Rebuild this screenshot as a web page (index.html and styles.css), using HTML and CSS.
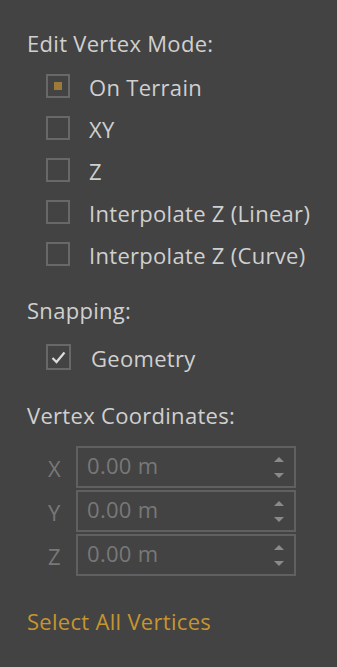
FILE: index.html
```html
<!DOCTYPE html>
<html lang="en">
<head>
    <meta charset="UTF-8">
    <title>Edit Vertex</title>
    <link rel="stylesheet" href="styles.css">
</head>
<body>
<div class="panel">
    <h3 class="section-title first">Edit Vertex Mode:</h3>
    <ul class="option-list">
        <li class="option"><span class="box radio-on"></span><span class="label">On Terrain</span></li>
        <li class="option"><span class="box"></span><span class="label">XY</span></li>
        <li class="option"><span class="box"></span><span class="label">Z</span></li>
        <li class="option"><span class="box"></span><span class="label">Interpolate Z (Linear)</span></li>
        <li class="option"><span class="box"></span><span class="label">Interpolate Z (Curve)</span></li>
    </ul>

    <h3 class="section-title snap-title">Snapping:</h3>
    <ul class="option-list snap-list">
        <li class="option">
            <span class="box box-lg">
                <svg width="15" height="13" viewBox="0 0 15 13"><path d="M1.5 7 L5.5 11 L13.5 1.5" fill="none" stroke="#dcdcdc" stroke-width="2.2"/></svg>
            </span>
            <span class="label label-geo">Geometry</span>
        </li>
    </ul>

    <h3 class="section-title coord-title">Vertex Coordinates:</h3>
    <div class="coords">
        <div class="coord-row">
            <span class="axis">X</span>
            <div class="num-input"><span class="value">0.00 m</span><span class="spin"><i class="up"></i><i class="down"></i></span></div>
        </div>
        <div class="coord-row">
            <span class="axis">Y</span>
            <div class="num-input"><span class="value">0.00 m</span><span class="spin"><i class="up"></i><i class="down"></i></span></div>
        </div>
        <div class="coord-row">
            <span class="axis">Z</span>
            <div class="num-input"><span class="value">0.00 m</span><span class="spin"><i class="up"></i><i class="down"></i></span></div>
        </div>
    </div>

    <a class="select-all">Select All Vertices</a>
</div>
</body>
</html>
```

FILE: styles.css
```css
/*reset*/
body,h3,ul,li{
    padding: 0;
    margin: 0;
}
html,body{
    height: 100%;
}
body{
    background: #434343;
    font-family: "Open Sans","Noto Sans","Liberation Sans",sans-serif;
    font-size: 22px;
    letter-spacing: 0.3px;
    color: #d0d0d0;
}
ul{
    list-style: none;
}
.panel{
    padding: 28px 0 0 27px;
}
.section-title{
    font-weight: normal;
    font-size: 22px;
    line-height: 30px;
}
.snap-title{
    margin-top: 20px;
}
.coord-title{
    margin-top: 22px;
}
.option-list{
    margin-top: 7px;
}
.snap-list{
    margin-top: 11px;
}
.option{
    display: flex;
    align-items: center;
    height: 42px;
    padding-left: 19px;
}
.box{
    display: flex;
    align-items: center;
    justify-content: center;
    width: 24px;
    height: 24px;
    box-sizing: border-box;
    border: 2px solid #686868;
}
.box-lg{
    width: 25px;
    height: 26px;
}
.radio-on::after{
    content: "";
    width: 8px;
    height: 8px;
    background: #9c7a3a;
}
.label{
    margin-left: 19px;
    line-height: 30px;
    padding-top: 2px;
}
.label-geo{
    margin-left: 20px;
}
.coords{
    margin-top: 16px;
}
.coord-row{
    display: flex;
    align-items: center;
    margin-bottom: 2px;
}
.axis{
    width: 28px;
    padding-left: 21px;
    color: #787878;
    line-height: 30px;
    padding-top: 2px;
}
.num-input{
    display: flex;
    align-items: center;
    width: 220px;
    height: 42px;
    box-sizing: border-box;
    border: 2px solid #606060;
    padding: 0 10px 0 9px;
    color: #787878;
}
.value{
    flex: 1;
    line-height: 30px;
    margin-top: -5px;
}
.spin{
    display: flex;
    flex-direction: column;
    gap: 11px;
}
.spin i{
    display: block;
    width: 0;
    height: 0;
    border-left: 5px solid transparent;
    border-right: 5px solid transparent;
}
.spin .up{
    border-bottom: 5px solid #8a8a8a;
}
.spin .down{
    border-top: 5px solid #8a8a8a;
}
.select-all{
    display: block;
    margin-top: 30px;
    line-height: 30px;
    color: #c6952f;
    cursor: pointer;
}
```
